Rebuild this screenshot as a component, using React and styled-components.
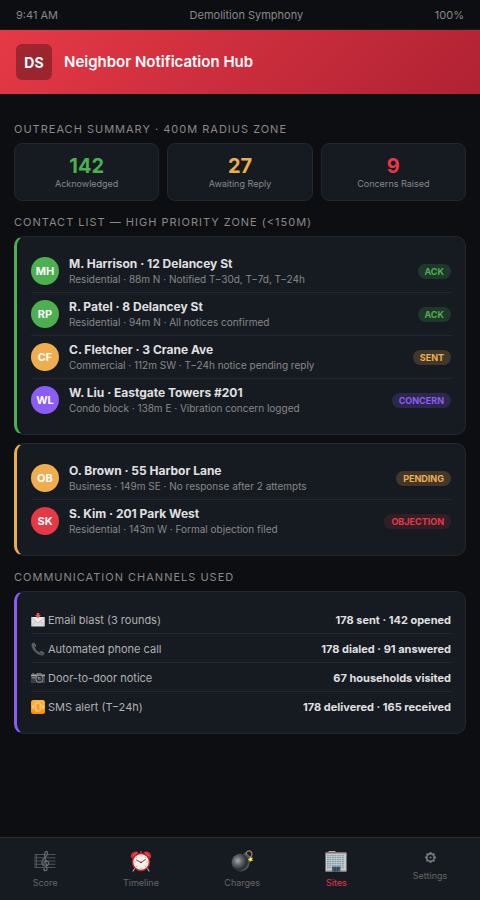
import React from "react";
import styled, { createGlobalStyle } from "styled-components";

const c = {
  bg: "#0d0e12",
  card: "#161b22",
  line: "#23272f",
  text: "#e0e0e0",
  muted: "#888888",
  green: "#4caf50",
  amber: "#f0ad4e",
  red: "#e63946",
  violet: "#8b5cf6",
};

const tints = {
  green: "rgba(76, 175, 80, 0.2)",
  amber: "rgba(240, 173, 78, 0.2)",
  red: "rgba(230, 57, 70, 0.15)",
  violet: "rgba(139, 92, 246, 0.2)",
};

const GlobalStyle = createGlobalStyle`
  *, *::before, *::after { box-sizing: border-box; }
  body {
    margin: 0;
    background: ${c.bg};
    color: ${c.text};
    font-family: Inter, "Liberation Sans", sans-serif;
  }
`;

const Page = styled.div`
  min-height: 100vh;
  display: flex;
  flex-direction: column;
`;

const StatusBar = styled.div`
  display: flex;
  justify-content: space-between;
  padding: 8px 16px 7px;
  border-bottom: 1px solid #1a1a1a;
  font-size: 11px;
  line-height: 14px;
  color: ${c.muted};
`;

const Header = styled.header`
  display: flex;
  align-items: center;
  gap: 12px;
  padding: 14px 16px;
  background: linear-gradient(135deg, #e63946 0%, #b02233 100%);
`;

const Logo = styled.div`
  display: grid;
  place-items: center;
  width: 36px;
  height: 36px;
  border-radius: 6px;
  background: rgba(0, 0, 0, 0.3);
  color: #fff;
  font-size: 14px;
  font-weight: 700;
`;

const Title = styled.h1`
  margin: 0;
  font-size: 15px;
  line-height: 20px;
  font-weight: 600;
  color: #fff;
`;

const Main = styled.main`
  flex: 1;
  padding: 14px;
`;

const SectionLabel = styled.h2`
  margin: 14px 0 7px;
  font-size: 11px;
  line-height: 14px;
  font-weight: 400;
  letter-spacing: 1px;
  text-transform: uppercase;
  color: ${c.muted};
`;

const Stats = styled.div`
  display: grid;
  grid-template-columns: repeat(3, 1fr);
  gap: 8px;
`;

const Stat = styled.div`
  display: flex;
  flex-direction: column;
  align-items: center;
  padding: 10px 8px;
  border: 1px solid ${c.line};
  border-radius: 8px;
  background: ${c.card};
`;

const StatValue = styled.strong`
  font-size: 20px;
  line-height: 24px;
  font-weight: 700;
  color: ${(p) => c[p.$tone]};
`;

const StatName = styled.span`
  font-size: 9px;
  line-height: 12px;
  color: ${c.muted};
`;

const Card = styled.ul`
  list-style: none;
  margin: 0 0 8px;
  padding: 13px 14px;
  border: 1px solid ${c.line};
  border-left: 3px solid ${(p) => c[p.$tone]};
  border-radius: 10px;
  background: ${c.card};
`;

const ContactRow = styled.li`
  display: flex;
  align-items: center;
  gap: 10px;
  padding: 6px 0;
  border-bottom: 1px solid ${c.line};
  &:last-child { border-bottom: 0; }
`;

const Avatar = styled.div`
  flex: none;
  display: grid;
  place-items: center;
  width: 28px;
  height: 28px;
  border-radius: 50%;
  background: ${(p) => c[p.$tone]};
  color: #fff;
  font-size: 11px;
  font-weight: 700;
`;

const Who = styled.div`
  flex: 1;
  min-width: 0;
`;

const Name = styled.div`
  font-size: 12px;
  line-height: 16px;
  font-weight: 700;
`;

const Detail = styled.div`
  font-size: 10px;
  line-height: 14px;
  color: ${c.muted};
`;

const Badge = styled.span`
  padding: 2px 7px;
  border-radius: 8px;
  background: ${(p) => tints[p.$tone]};
  color: ${(p) => c[p.$tone]};
  font-size: 9px;
  line-height: 11px;
  font-weight: 700;
`;

const ChannelRow = styled.li`
  display: flex;
  justify-content: space-between;
  align-items: center;
  padding: 7px 0 5px;
  border-bottom: 1px solid ${c.line};
  font-size: 11px;
  line-height: 16px;
  &:last-child { border-bottom: 0; }
`;

const ChannelName = styled.span`
  display: flex;
  align-items: center;
  gap: 3px;
  color: #b0b0b0;
`;

const ChannelIcon = styled.svg`
  width: 14px;
  height: 14px;
`;

const ChannelValue = styled.span`
  font-weight: 700;
`;

const TabBar = styled.nav`
  position: sticky;
  bottom: 0;
  display: flex;
  justify-content: space-around;
  align-items: flex-start;
  padding: 12px 0 11px;
  border-top: 1px solid #2a2d33;
  background: ${c.card};
`;

const Tab = styled.a`
  display: flex;
  flex-direction: column;
  align-items: center;
  gap: 5px;
  font-size: 9px;
  line-height: 12px;
  text-decoration: none;
  color: ${(p) => (p.$active ? c.red : "#666666")};
`;

const TabIcon = styled.svg`
  width: 22px;
  height: 22px;
`;

const GearIcon = styled.svg`
  width: 15px;
  height: 15px;
`;

const MailIcon = () => (
  <ChannelIcon viewBox="0 0 28 28" aria-hidden="true">
    <rect x="0.5" y="8" width="27" height="19" rx="1.5" fill="#dedede" />
    <path d="M1 26.5 10.5 16M27 26.5 17.5 16" stroke="#b4b4b4" strokeWidth="1.2" />
    <path d="M1 8.5 14 20 27 8.5" fill="#eeeeee" stroke="#a9a9a9" strokeWidth="1.3" />
    <path d="M11.5 0h5v4h3.5l-6 6.5L8 4h3.5z" fill="#ef5a50" />
  </ChannelIcon>
);

const PhoneIcon = () => (
  <ChannelIcon viewBox="0 0 28 28" aria-hidden="true">
    <path
      d="M2 2.5C4.5.3 6.5 1 8 3.5l2 3.5c.8 1.8-.7 2.8-2 4 .8 4 5 8.2 9 9 1.2-1.3 2.2-2.8 4-2l4 2.3c2.500 1.500 2.800 3.700.5 5.700C21 29.500 12.500 25 8 20.200 3.500 16-1.500 7.500 2 2.500z"
      fill="#4b4e51"
    />
    <path d="M3.500 3.500C2.500 10 9 19 17 23.500" fill="none" stroke="#777b7e" strokeWidth="1.5" />
    <path d="m6 2.500 3.500 5.500M20 19l6 3.500" stroke="#909396" strokeWidth="1.2" />
  </ChannelIcon>
);

const CameraIcon = () => (
  <ChannelIcon viewBox="0 0 28 28" aria-hidden="true">
    <path d="M0 8h8l2-3h10l2 3h6v16H0z" fill="#3d3e40" />
    <path d="M0 7h28v3.500H0z" fill="#a5a5a2" />
    <path d="m10 7 2-3h8l2 3z" fill="#77787a" />
    <rect x="2" y="5" width="5" height="2" fill="#929292" />
    <rect x="1.5" y="12" width="8" height="3" fill="#77787a" />
    <circle cx="17" cy="15.5" r="8" fill="#8c8c8b" />
    <circle cx="17" cy="15.5" r="6" fill="#292c31" />
    <circle cx="17" cy="15.5" r="3.5" fill="#555b69" />
    <circle cx="15.5" cy="13.5" r="1.3" fill="#b6bdc8" />
  </ChannelIcon>
);

const VibrateIcon = () => (
  <ChannelIcon viewBox="0 0 28 28" aria-hidden="true">
    <defs>
      <linearGradient id="vibrate" x1="0" y1="0" x2="0" y2="1">
        <stop offset="0" stopColor="#ffb641" />
        <stop offset="1" stopColor="#ff8b00" />
      </linearGradient>
    </defs>
    <rect width="28" height="28" rx="5" fill="url(#vibrate)" />
    <rect x="9.5" y="6" width="9" height="16" rx="1.5" fill="#ff9f19" stroke="#ffe1ae" strokeWidth="2" />
    <path d="m7 9-2 2 1.500 3L5 17l2 2M21 9l2 2-1.500 3 1.500 3-2 2M3.500 11 2.500 14l1 3M24.500 11l1 3-1 3" fill="none" stroke="#ffe1ae" strokeWidth="1.5" />
  </ChannelIcon>
);

const ScoreIcon = () => (
  <TabIcon viewBox="0 0 44 44" aria-hidden="true">
    <path d="M2 9h41M2 15.500h41M2 22h41M2 28.500h41M2 35h41" stroke="#565a5e" strokeWidth="1.8" />
    <path d="M2 8v28M5 8v28" stroke="#515559" strokeWidth="1.8" />
    <path
      d="M20 40c3 3 7 1 6-4L21 11c-1-5 3-9 5-8 3 3-1 10-6 14-6 5-6 13 1 15 7 1 11-5 7-9-4-3-9 0-8 4"
      fill="none"
      stroke="#686b6e"
      strokeWidth="2.4"
      strokeLinecap="round"
    />
    <circle cx="20" cy="39" r="2.3" fill="#5b5e62" />
  </TabIcon>
);

const ClockIcon = () => (
  <TabIcon viewBox="0 0 44 44" aria-hidden="true">
    <path d="m10 36-4 6M34 36l4 6" stroke="#a5a7aa" strokeWidth="2.5" strokeLinecap="round" />
    <path d="M20 2h4v6h-4z" fill="#9b3034" />
    <path d="M2 15C0 7 8 0 17 4L5 17zM42 15C44 7 36 0 27 4l12 13z" fill="#d52c35" />
    <path d="m6 12 8-7M38 12l-8-7" stroke="#f16b6c" strokeWidth="2" />
    <circle cx="22" cy="24" r="18.5" fill="#c9202c" />
    <circle cx="22" cy="24" r="15.5" fill="#f4efe7" />
    <path d="M22 10v3M22 35v3M8 24h3M33 24h3M12 14l2 2M32 14l-2 2M12 34l2-2M32 34l-2-2" stroke="#8c8986" strokeWidth="1.3" />
    <path d="m13 20 9 5 9-6" fill="none" stroke="#35363a" strokeWidth="1.6" strokeLinecap="round" />
    <circle cx="22" cy="25" r="1.5" fill="#35363a" />
  </TabIcon>
);

const BombIcon = () => (
  <TabIcon viewBox="0 0 44 44" aria-hidden="true">
    <defs>
      <radialGradient id="bomb" cx="0.35" cy="0.4" r="0.65">
        <stop offset="0" stopColor="#a8acb0" />
        <stop offset="0.35" stopColor="#65696d" />
        <stop offset="0.8" stopColor="#25282c" />
        <stop offset="1" stopColor="#5d6164" />
      </radialGradient>
    </defs>
    <circle cx="19" cy="25" r="18" fill="url(#bomb)" />
    <path d="m25 8 4-4 10 9-4 5z" fill="#55595c" />
    <path d="M31 9c-2-9 10-10 11-1l-3 9" fill="none" stroke="#8d816e" strokeWidth="2.5" />
    <path d="m38 12 1.500 4L44 15l-2 4 2 3-4-.5-2 3-1.500-3.500-3-2 3.500-2z" fill="#ffd632" />
    <circle cx="39" cy="18.5" r="2" fill="#fff98f" />
  </TabIcon>
);

const windowRows = [10, 14, 18, 22, 26, 30, 34];
const windowCols = [4, 9, 14, 19, 24, 29, 34];

const BuildingIcon = () => (
  <TabIcon viewBox="0 0 44 44" aria-hidden="true">
    <path d="M7 2h14v4H7z" fill="#aeb0af" />
    <path d="M1 6h42v37H1z" fill="#c5cccb" />
    <path d="M1 4h42v3H1z" fill="#876f66" />
    {windowRows.map((y) =>
      windowCols.map((x) => <rect key={`${x}-${y}`} x={x} y={y} width="3.5" height="2.5" fill="#7f9eab" />)
    )}
    <path d="M14 33h17v10H14z" fill="#4b5b65" />
    <path d="M18 35h9v8h-9z" fill="#234b66" />
    <path d="M22.500 35v8" stroke="#7195a8" />
    <path d="M1 41h13v2H1zM31 41h12v2H31z" fill="#a7806c" />
  </TabIcon>
);

const SettingsIcon = () => (
  <GearIcon viewBox="0 0 30 30" aria-hidden="true">
    <circle cx="15" cy="15" r="7.5" fill="none" stroke="#747679" strokeWidth="3.6" />
    <circle cx="15" cy="15" r="2.2" fill="#747679" />
    <path
      d="M15 4v3.500M15 22.500V26M4 15h3.500M22.500 15H26M7.200 7.200l2.500 2.500M20.300 20.300l2.500 2.500M22.800 7.200l-2.500 2.500M9.700 20.300l-2.500 2.500"
      stroke="#747679"
      strokeWidth="3.6"
    />
  </GearIcon>
);

const stats = [
  { value: "142", name: "Acknowledged", tone: "green" },
  { value: "27", name: "Awaiting Reply", tone: "amber" },
  { value: "9", name: "Concerns Raised", tone: "red" },
];

const nearContacts = [
  { initials: "MH", tone: "green", name: "M. Harrison · 12 Delancey St", detail: "Residential · 88m N · Notified T−30d, T−7d, T−24h", badge: "ACK", badgeTone: "green" },
  { initials: "RP", tone: "green", name: "R. Patel · 8 Delancey St", detail: "Residential · 94m N · All notices confirmed", badge: "ACK", badgeTone: "green" },
  { initials: "CF", tone: "amber", name: "C. Fletcher · 3 Crane Ave", detail: "Commercial · 112m SW · T−24h notice pending reply", badge: "SENT", badgeTone: "amber" },
  { initials: "WL", tone: "violet", name: "W. Liu · Eastgate Towers #201", detail: "Condo block · 138m E · Vibration concern logged", badge: "CONCERN", badgeTone: "violet" },
];

const openContacts = [
  { initials: "OB", tone: "amber", name: "O. Brown · 55 Harbor Lane", detail: "Business · 149m SE · No response after 2 attempts", badge: "PENDING", badgeTone: "amber" },
  { initials: "SK", tone: "red", name: "S. Kim · 201 Park West", detail: "Residential · 143m W · Formal objection filed", badge: "OBJECTION", badgeTone: "red" },
];

const channels = [
  { Icon: MailIcon, name: "Email blast (3 rounds)", value: "178 sent · 142 opened" },
  { Icon: PhoneIcon, name: "Automated phone call", value: "178 dialed · 91 answered" },
  { Icon: CameraIcon, name: "Door-to-door notice", value: "67 households visited" },
  { Icon: VibrateIcon, name: "SMS alert (T−24h)", value: "178 delivered · 165 received" },
];

const tabs = [
  { Icon: ScoreIcon, label: "Score" },
  { Icon: ClockIcon, label: "Timeline" },
  { Icon: BombIcon, label: "Charges" },
  { Icon: BuildingIcon, label: "Sites", active: true },
  { Icon: SettingsIcon, label: "Settings" },
];

const ContactCard = ({ tone, contacts }) => (
  <Card $tone={tone}>
    {contacts.map((p) => (
      <ContactRow key={p.initials}>
        <Avatar $tone={p.tone}>{p.initials}</Avatar>
        <Who>
          <Name>{p.name}</Name>
          <Detail>{p.detail}</Detail>
        </Who>
        <Badge $tone={p.badgeTone}>{p.badge}</Badge>
      </ContactRow>
    ))}
  </Card>
);

export default function App() {
  return (
    <Page>
      <GlobalStyle />
      <StatusBar>
        <span>9:41 AM</span>
        <span>Demolition Symphony</span>
        <span>100%</span>
      </StatusBar>
      <Header>
        <Logo>DS</Logo>
        <Title>Neighbor Notification Hub</Title>
      </Header>
      <Main>
        <SectionLabel>Outreach Summary · 400m Radius Zone</SectionLabel>
        <Stats>
          {stats.map((s) => (
            <Stat key={s.name}>
              <StatValue $tone={s.tone}>{s.value}</StatValue>
              <StatName>{s.name}</StatName>
            </Stat>
          ))}
        </Stats>
        <SectionLabel>Contact List — High Priority Zone (&lt;150m)</SectionLabel>
        <ContactCard tone="green" contacts={nearContacts} />
        <ContactCard tone="amber" contacts={openContacts} />
        <SectionLabel>Communication Channels Used</SectionLabel>
        <Card $tone="violet">
          {channels.map(({ Icon, name, value }) => (
            <ChannelRow key={name}>
              <ChannelName>
                <Icon />
                {name}
              </ChannelName>
              <ChannelValue>{value}</ChannelValue>
            </ChannelRow>
          ))}
        </Card>
      </Main>
      <TabBar>
        {tabs.map(({ Icon, label, active }) => (
          <Tab key={label} href={`#${label.toLowerCase()}`} $active={active} aria-current={active ? "page" : undefined}>
            <Icon />
            {label}
          </Tab>
        ))}
      </TabBar>
    </Page>
  );
}
